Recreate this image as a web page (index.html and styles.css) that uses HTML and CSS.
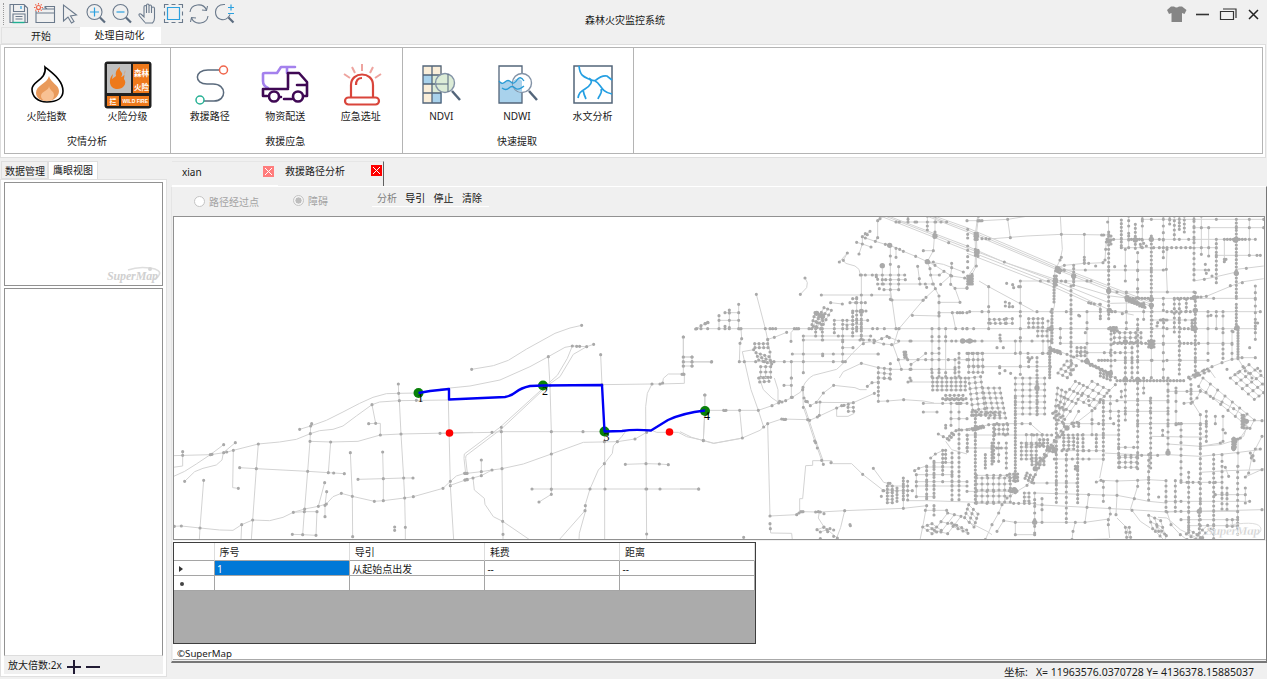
FILE: index.html
```html
<!DOCTYPE html>
<html lang="zh-CN">
<head>
<meta charset="utf-8">
<title>森林火灾监控系统</title>
<link rel="stylesheet" href="styles.css">
</head>
<body>
<div class="app">
  <header class="titlebar">
    <div class="quick">
      <span class="grip"></span>
      <svg viewBox="0 0 22 22"><path class="ln" d="M2 1.500h14l3.500 3.500v14.500H2zM5.500 1.500v7h11v-7M5 19v-8h12v8M7.500 13.500h7M7.500 16h7"/><path class="bl" d="M13 3v3"/><path class="gr" d="M4.500 19.500h12"/></svg>
      <svg viewBox="0 0 22 22"><path class="ln" d="M2 8v11.500h18.500V6H8M10 4h1l2 2M11 3.500h9.500v4M2 10h18"/><circle cx="4.500" cy="4.500" r="2" class="rd"/><path class="rd" d="M4.500 0v1.500M4.500 7.500v1.500M0 4.500h1.500M7.500 4.500h1.500M1.300 1.300l1 1M6.700 6.700l1 1M7.700 1.300l-1 1M1.300 7.700l1-1"/></svg>
      <svg viewBox="0 0 22 22"><path class="ln" d="M4.500 2v16l4.500-4 3.500 6 2.500-1.500-3.500-5.500 6-1z"/></svg>
      <svg viewBox="0 0 22 22"><circle class="ln" cx="9.500" cy="9" r="7.500"/><path class="bl" d="M5 9h9M9.500 4.500v9"/><path class="hd" d="M15 14.500l5 5"/></svg>
      <svg viewBox="0 0 22 22"><circle class="ln" cx="9.500" cy="9" r="7.500"/><path class="bl" d="M5.500 9h8"/><path class="hd" d="M15 14.500l5 5"/></svg>
      <svg viewBox="0 0 22 22"><path class="ln" d="M8 19.500L2.500 13c-1.500-2 .5-3 2-1.500L7 14V4c0-2 2.500-2 2.500 0v6V2.500c0-2 2.500-2 2.500 0V10 3.500c0-2 2.500-2 2.500 0V10 5.500c0-2 3-2 3 0V15c0 2-1 4-2 5H8"/></svg>
      <svg viewBox="0 0 22 22"><path class="ln" d="M1.500 5V1.500h4M15.500 1.500h4V5M19.500 16v3.500h-4M5.500 19.500h-4V16M8.500 1.500h4M8.500 19.500h4M1.500 8.500v4M19.500 8.500v4"/><path class="bl" d="M4.500 4.500h12v12h-12z"/></svg>
      <svg viewBox="0 0 22 22"><path class="ln" d="M2 9C3 1 15-1 18.500 7M19.500 3l-1 4.500-4.500-.5M20 13c-1 8-13 10-16.500 2M2.500 19l1-4.500 4.500.500"/></svg>
      <svg viewBox="0 0 22 22"><path class="ln" d="M11 1.500C4.500 1 1.500 5 1.500 9c0 8 9 9.500 12.500 5.500 1.500-1.500 2-3 2-3"/><path class="bl" d="M14 4.500h6M17 1.500v6M14 10.500h6"/><path class="hd" d="M14.500 14.500l5 5"/></svg>
    </div>
    <h1>森林火灾监控系统</h1>
    <div class="winbtns">
      <svg viewBox="0 0 94 22"><path fill="#858585" d="M5 1.500h3q2.500 2 5 0h3l4.500 3.500-2 4-2.500-1V17H5.500V8L3 9 1 5z"/><path fill="none" stroke="#333" stroke-width="1.600" d="M30 9.500h13"/><path fill="none" stroke="#333" stroke-width="1.200" d="M54.500 6.500h13v8h-13zM57 4h13v9"/><path fill="none" stroke="#222" stroke-width="1.500" d="M83 5l9 9M92 5l-9 9"/></svg>
    </div>
    <nav class="tabs"><span class="tab">开始</span><span class="tab on">处理自动化</span></nav>
  </header>

  <section class="ribbon">
    <div class="groups">
      <div class="group g1">
        <div class="items">
          <div class="item"><svg viewBox="0 0 48 48"><path d="M22 6c7 6 18 13 18 24 0 7-6 11-16 11S9 35 9 28C9 20 24 19 22 6z" fill="#fff" stroke="#000" stroke-width="1.600"/><path d="M26 15c-2 8-13 9-13 17 0 5 5 8 11 8s12-4 12-10-8-8-10-15z" fill="#e99a5b"/><path d="M26 25c0 5-8 5-8 10 0 3 3 5 7 5s6-3 6-6c0-4-4-4-5-9z" fill="#f8c193"/></svg><span>火险指数</span></div>
          <div class="item"><svg viewBox="0 0 48 48"><rect x="0.500" y="0.500" width="47" height="47" rx="3" fill="#202020"/><path d="M3 3h24v29H3z" fill="#bfbfbf"/><path d="M29 3h16v29H29zM3 35h12v10H3zM17 35h28v10H17z" fill="#ee791b"/><path d="M16 6c-2 5 5 5 1 10 2 0 5-3 4-7l-1 9c4 5-2 11-8 10-7-1-8-10-3-15l-1 5 4-3c-1-4 1-7 4-9z" fill="#ee791b"/><g class="sign"><text x="30" y="15">森林</text><text x="30" y="28.500">火险</text><text x="5.500" y="42.500" class="s8">拦</text><text x="18.500" y="42.300" class="s6">WILD FIRE</text></g></svg><span>火险分级</span></div>
        </div>
        <div class="gname">灾情分析</div>
      </div>
      <div class="group">
        <div class="items">
          <div class="item"><svg viewBox="0 0 48 48"><path fill="none" stroke="#5b6b7d" stroke-width="1.500" d="M34 9H22c-14 0-14 14-1 14h6c14 0 14 17 1 17H16"/><circle cx="37.500" cy="9" r="4" fill="#fff" stroke="#f0654b" stroke-width="1.500"/><circle cx="14" cy="39" r="4" fill="#fff" stroke="#28b195" stroke-width="1.500"/></svg><span>救援路径</span></div>
          <div class="item"><svg viewBox="0 0 48 48"><g fill="none" stroke-width="2.600" stroke-linejoin="round" stroke-linecap="round"><path stroke="#a481ed" d="M2 20V13q0-1 2-1h12l4-6h14M2 20q0 5 5 7M26 6v6"/><path stroke="#3f0854" d="M27 27V12h11l8 9v14h-3M2 28h25M2 28v7h4M23 38h8M36 24h9M17 36h3"/><circle stroke="#3f0854" fill="#fff" cx="13" cy="35.500" r="5"/><circle stroke="#3f0854" fill="#fff" cx="37" cy="35.500" r="5"/></g></svg><span>物资配送</span></div>
          <div class="item"><svg viewBox="0 0 48 48"><g fill="none" stroke="#d9453b" stroke-width="2.200"><path d="M14 36V24c0-14 22-14 22 0v12M25 17c-4 0-6 3-6 7"/><rect x="8" y="36.500" width="34" height="7" rx="3.500"/></g><path stroke="#eea49f" stroke-width="2" d="M25 3v7M15 6l3 6M36 6l-3 6M7 13l6 4M44 13l-6 4"/></svg><span>应急选址</span></div>
        </div>
        <div class="gname">救援应急</div>
      </div>
      <div class="group">
        <div class="items">
          <div class="item"><svg viewBox="0 0 48 48"><path fill="#faeed9" d="M6 5h19v37H6z"/><path fill="#a9d2ec" d="M6 14h9v9H6zM15 32h10v10H15z"/><path fill="#dcebd6" d="M15 14h10v18H15z"/><path fill="none" stroke="#53657a" stroke-width="1.300" d="M6 5h18v37H6zM15 5v37M6 14h18M6 23h18M6 32h18"/><circle cx="28" cy="22" r="9.500" fill="#dcecd7" stroke="#8292a6" stroke-width="1.400"/><path d="M31 13v18M19 23h12" stroke="#53657a"/><path d="M35 30l8 9" stroke="#53657a" stroke-width="2.500"/></svg><span>NDVI</span></div>
          <div class="item"><svg viewBox="0 0 48 48"><path fill="#a9d2ec" d="M6 20q3 4 6 1t6 0 6-2 5 2v21H6z"/><path fill="none" stroke="#53657a" stroke-width="1.300" d="M6 5h23v37H6z"/><circle cx="29" cy="22" r="9.500" fill="#fff" stroke="#8292a6" stroke-width="1.400"/><path fill="#a9d2ec" d="M20 20q5-5 9 0v11q-7 0-9-7z"/><path fill="none" stroke="#289bd5" stroke-width="1.300" d="M6 20q3 4 6 1t6 0 6-2 7 1M9 27q4 3 7 0t6 0 9-2"/><path d="M36 30l8 9" stroke="#53657a" stroke-width="2.500"/></svg><span>NDWI</span></div>
          <div class="item"><svg viewBox="0 0 48 48"><path fill="#fff" stroke="#53657a" stroke-width="1.500" d="M6 5h38v37H6z"/><path fill="none" stroke="#259fe2" stroke-width="1.700" d="M11 5c1 10 5 11 10 13s1 7-4 10-6 4-7 9M15 29q1 5 3 9M21 17q4 4 7 2 6-5 11-4l5 4M27 20c6 2 5 11 17 13M33 28c2 4-2 6-3 10"/></svg><span>水文分析</span></div>
        </div>
        <div class="gname">快速提取</div>
      </div>
    </div>
  </section>

  <main class="body">
    <aside class="side">
      <div class="sidetabs"><span class="st">数据管理</span><span class="st on">鹰眼视图</span></div>
      <div class="sidepanel">
        <div class="overview"><svg viewBox="0 0 56 18" class="logo"><path fill="none" stroke="#dedede" stroke-width="1.500" d="M22 4C35-1 58 2 53 9q-1 3-5 4"/><circle cx="44" cy="3" r="2" fill="#d6d6d6"/><text x="1" y="14" textLength="51">SuperMap</text></svg></div>
        <div class="bigbox"></div>
        <div class="zoombar"><span>放大倍数:2x</span><svg viewBox="0 0 36 16"><path stroke="#221c35" stroke-width="2" d="M0 9h14M7 2v14M19 9h14"/></svg></div>
      </div>
    </aside>
    <section class="work">
      <div class="doctabs">
        <div class="dt"><span>xian</span><svg class="x dim" viewBox="0 0 11 11"><path d="M2 2l7 7M9 2l-7 7"/></svg></div>
        <div class="dt on"><span>救援路径分析</span><svg class="x" viewBox="0 0 11 11"><path d="M2 2l7 7M9 2l-7 7"/></svg></div>
      </div>
      <div class="view">
        <div class="tools">
          <label class="opt o1"><i></i>路径经过点</label>
          <label class="opt o2"><i class="sel"></i>障碍</label>
          <div class="acts"><span class="off">分析</span><span>导引</span><span>停止</span><span>清除</span></div>
        </div>
        <svg id="map" class="map" viewBox="174 217 1090 322"></svg>
        <div class="lower">
          <div class="grid">
            <div class="row head"><b></b><b>序号</b><b>导引</b><b>耗费</b><b>距离</b></div>
            <div class="row"><b><i class="tri"></i></b><b class="pick">1</b><b>从起始点出发</b><b>--</b><b>--</b></div>
            <div class="row"><b><i class="dot"></i></b><b></b><b></b><b></b><b></b></div>
          </div>
          <div class="copy">©SuperMap</div>
        </div>
      </div>
    </section>
  </main>
  <footer class="status"><span>坐标:</span><span>X= 11963576.0370728 Y= 4136378.15885037</span></footer>
</div>
<script src="map.js"></script>
</body>
</html>
```
FILE: styles.css
```css
* { box-sizing: border-box; }
body { margin: 0; background: #f0f0f0; color: #1a1a1a; font: 10px/12px "Noto Sans", "Noto Sans CJK SC", sans-serif; }
.app { width: 1267px; height: 679px; overflow: hidden; display: flex; flex-direction: column; background: #f0f0f0; }
svg { display: block; }

.titlebar { height: 44px; flex: none; display: grid; grid-template-columns: 500px 250px 1fr; grid-template-rows: 27px 17px; }
.quick { display: flex; gap: 3.800px; padding: 3px 0 0 3px; }
.quick svg { width: 22px; height: 22px; }
.grip { width: 1px; height: 22px; border-left: 1px dotted #999; }
.ln { fill: none; stroke: #6b7a8c; stroke-width: 1.100; }
.bl { fill: none; stroke: #2ba0df; stroke-width: 1.200; }
.gr { stroke: #20af93; stroke-width: 1.400; }
.rd { fill: none; stroke: #f0654b; stroke-width: 1.100; }
.hd { stroke: #5d6d80; stroke-width: 2.200; }
h1 { margin: 0; font-size: 10px; line-height: 12px; font-weight: 400; text-align: center; padding-top: 14px; }
.winbtns { justify-self: end; padding: 5px 7px 0 0; }
.winbtns svg { width: 94px; height: 22px; }
.tabs { grid-column: 1 / 4; display: flex; padding-left: 1px; }
.tab { width: 79px; border: 1px solid #e2e2e2; border-right: 0; text-align: center; line-height: 16px; }
.tab.on { width: 81px; background: #fff; border: 0; line-height: 16px; padding-right: 2px; }

.ribbon { height: 114px; flex: none; background: #fff; border: 1px solid #dedede; padding: 2px 3px; margin-right: 1px; }
.groups { display: flex; height: 107px; border: 1px solid #b4b4b4; width: 1259px; }
.group { width: 231.600px; border-right: 1px solid #b4b4b4; padding: 13px 3px 0 1px; }
.g1 { width: 166px; padding: 13px 2px 0 1px; }
.items { display: flex; }
.item { flex: 1; display: flex; flex-direction: column; align-items: center; line-height: 12px; }
.item svg { width: 48px; height: 48px; }
.item span { height: 13px; padding-top: 1px; }
.gname { text-align: center; padding-top: 13px; }
.sign { fill: #fff; font: bold 7.500px "Noto Sans CJK SC", sans-serif; }
.s8 { font-size: 7px; }
.s6 { font-family: "Liberation Sans", sans-serif; font-size: 5px; }

.body { height: 505px; flex: none; display: flex; gap: 4px; padding-top: 3px; }
.side { width: 167px; height: 518px; display: flex; flex-direction: column; }
.sidetabs { display: flex; height: 18px; padding-left: 1px; }
.st { width: 47px; border: 1px solid #dfdfdf; padding-left: 3px; line-height: 18px; white-space: nowrap; }
.st.on { width: 50px; background: #fff; padding-left: 4px; line-height: 16px; border-bottom: 0; }
.sidepanel { height: 498px; background: #fff; border: 1px solid #e0e0e0; padding: 2px 3px; }
.overview { height: 104px; width: 159px; border: 1px solid #919191; display: flex; justify-content: flex-end; align-items: flex-end; }
.logo { width: 56px; height: 20px; font: italic bold 12px "Liberation Serif", serif; fill: #d0d0d0; }
.bigbox { margin-top: 2px; height: 368px; width: 159px; border: 1px solid #919191; border-bottom-color: #ddd; }
.zoombar { height: 18px; width: 159px; background: #f0f0f0; display: flex; padding: 3px 0 0 4px; gap: 5px; }
.zoombar svg { width: 36px; height: 16px; margin-top: -1px; }

.work { width: 1096px; display: flex; flex-direction: column; }
.doctabs { height: 25px; display: flex; padding-left: 1px; }
.dt { display: flex; width: 106px; border-top: 1px solid #e6e6e6; border-bottom: 1px solid #fff; justify-content: space-between; padding: 4px 4px 0 10px; }
.dt.on { border-right: 1px solid #606060; border-bottom: 0; padding: 3px 1px 0 7px; }
.x { width: 11px; height: 11px; background: #f00; fill: none; stroke: #fff; }
.dim { background: #ff7c7c; }
.view { height: 477px; border: 1px solid #e5e5e5; border-right-color: #777; border-bottom: 2px solid #777; border-top-color: #fff; padding-left: 1px; }
.tools { height: 29px; display: flex; color: #a3a3a3; }
.opt { display: flex; gap: 4px; padding-top: 9px; }
.opt i { width: 11px; height: 11px; border: 1px solid #c4c4c4; border-radius: 50%; background: #fff; }
.opt .sel { background: radial-gradient(circle, #bdbdbd 45%, #f4f4f4 52%); }
.o1 { margin-left: 21px; width: 99px; }
.o2 { width: 79px; padding-top: 8px; }
.acts { display: flex; gap: 8.300px; color: #111; padding: 5px 7px 0 5px; height: 20px; border-bottom: 1px solid #fff; }
.off { color: #808080; }
.map { width: 1092px; height: 324px; background: #fff; border: 1px solid #919191; }
.lower { height: 120px; background: #fff; border-top: 1px solid #f0f0f0; border-bottom: 1px solid #aaa; padding-top: 1px; }
.grid { width: 583px; height: 102px; background: #ababab; border: 1px solid #3e3e3e; }
.row { display: grid; grid-template-columns: 40.500px 135.200px 135.200px 135.200px 1fr; grid-template-rows: 15px; height: 15px; }
.row b { font-weight: 400; background: #fff; border-right: 1px solid #a5a5a5; border-bottom: 1px solid #a5a5a5; padding-left: 2.500px; line-height: 16px; }
.row.head { height: 18px; grid-template-rows: 18px; }
.head b { padding-left: 5px; border-right-color: #ddd; line-height: 18px; }
.row .pick { background: #0078d7; color: #fff; }
.tri { display: block; width: 0; border: 3px solid transparent; border-left: 4px solid #333; margin: 5px 0 0 2px; }
.dot { display: block; width: 4px; height: 4px; border-radius: 50%; background: #444; margin: 6px 0 0 3px; }
.copy { padding: 4px 4px; font-size: 9.700px; }
.status { display: flex; justify-content: flex-end; gap: 8px; padding: 3px 13px 0 0; font-size: 10.500px; }

.road { fill: none; stroke: #d3d3d3; stroke-width: 3; }
.node { fill: none; stroke: #a9a9a9; stroke-width: 9.500; stroke-linecap: round; }
.hub { fill: #a9a9a9; }
.route { fill: none; stroke: #0000f5; stroke-width: 2.400; stroke-linejoin: round; }
.stop { fill: #088008; }
.bar { fill: #f00; }
.num { font: 12px "Liberation Serif", serif; fill: #000; }
.mlogo { font: italic bold 13px "Liberation Serif", serif; fill: #d2d2d2; stroke: #fff; stroke-width: .3px; }
```
FILE: map.js
```
/* Road network, one block per tile. Units are thirds of a pixel.
   v x y..   column of junctions      h y x..   row of junctions
   p x,y ..  road with junctions      l x,y ..  road only
   d x,y ..  junctions only           g x y ax ay an bx by bn   lattice
   c x,y ..  large interchange
   a-b/s in v and h expands to an evenly spaced run */
var tiles = [
[173, 370, `
l 0,257 112,254 160,247 181,241 256,222 320,216 370,208 412,191 440,182 480,178 510,168 550,138 597,104 620,96 679,92 826,90
l 0,320 35,304 70,282 112,254 152,224
l 35,334 65,305 90,295 130,285 147,270 151,248 187,218
l 380,178 413,168 460,151 510,126 560,100 600,82 640,71 677,70 737,69
d 112,254 117,253 152,248 161,246 181,241 256,222 412,191 597,104 679,92 730,91 152,224 35,334 187,218 380,178 413,168 677,70
p 416,161 413,168 412,191 411,214 404,304 395,417 394,425 389,494
v 29 245 256
l 29,256 29,288 0,292
l 181,241 179,353 196,355
d 196,355
p 256,222 250,296 239,450
l 239,450 235,510
p 200,293 250,296 404,304 466,308 482,309 514,311
l 411,214 473,216 555,214 622,195 684,192 829,189 900,187
d 411,214 473,216 622,195 684,192
p 473,216 466,308
p 455,338 436,409
p 461,365 456,406 456,440
p 597,104 608,160 587,161
l 608,160 622,160 622,195
p 676,42 677,70 679,92 684,192 692,324 695,384 697,472
l 697,472 697,510
p 532,248 538,379 539,500
p 629,246 631,326 631,392
p 555,328 631,326 692,324 720,324
p 92,331 81,474
l 81,474 79,510
l 0,469 25,468 81,474 140,480 180,481 206,464 239,450 290,452 330,442 361,427 395,417 436,409 460,402 480,380 505,370 538,379 604,394 631,392 695,384 721,380 810,355 832,334 850,318 875,310
d 4,469 25,468 206,464 361,427 436,409 460,402 505,370 604,394 721,380 810,355 832,334 832,347 875,310 882,310 876,330 883,329
p 361,427 394,425 432,425 429,496
p 358,493 389,494 429,496
l 206,464 204,510
l 826,90 832,347 842,510
d 665,471 665,481
`],
[440, 310, `
l 95,178 160,167 205,151 260,117 345,70 390,54 425,46
d 95,178 425,46
l 0,237 90,228 180,210 270,170 325,140 375,112 397,108 440,110 461,103
d 325,140 397,108 410,109 419,109 440,110 461,103
l 397,108 382,145 352,196 320,225 180,352 73,432 72,445 77,490
l 440,110 400,133 360,200 325,225 184,357 78,437 77,445 82,490
p 325,140 330,227 334,365 334,432 334,538 334,553 297,576
p 482,134 486,224
p 0,370 156,367 184,365 334,365 429,365 494,365
p 184,352 184,365 186,476 188,634 189,673
l 189,673 189,690
l 486,224 636,222 660,222 733,220 733,192 685,192 670,205 668,220
d 636,222 660,222 668,219 730,192
l 636,222 622,250 617,290 620,690
d 620,367 618,461 620,537 620,672
p 730,81 730,141 730,156 730,168 730,192
h 141 730 756
h 156 730 756 814
v 756 141 156 168
l 620,367 585,387 532,395 430,397 334,432 250,462 186,476 156,480 124,497 79,509 31,526
d 585,387 532,395 493,395 156,480 124,497 99,504
p 75,490 81,490 124,485 124,450
l 124,485 156,480
d 75,510 81,508
l 99,504 103,540 133,565 135,583 160,620 188,634 270,690
l 560,360 545,380 520,408 517,430 493,461 475,480 450,537 437,580 437,602 418,670 417,690
d 493,461 450,537 436,587 435,602
l 435,602 357,690
l 494,365 494,690
h 537 276 334 450 495 618 660 776
p 556,463 618,461 658,462 685,464
l 633,360 650,367 715,367 740,380 790,391 822,400 900,386
p 795,255 795,300 790,391
d 767,57 796,41 803,37
l 767,57 803,37
`],
[680, 216, `
h 338 50 63 83 117 135 148 176 256 270 278 287 343 350 387 395 407 427 463 488 518 530 544 578 592 613 648 657 756 777 797 848 861
v 176 265 290 313 338
v 148 282 291 313 338
v 117 299 313 338
h 290 135 148 176
h 313 117 176
d 135,331 148,335 63,329 75,323 84,320
p 229,235 256,338 263,371 270,408 273,437
p 183,338 185,368 180,382 178,437
h 437 178 193 227 253 282 313 334 370 460 488 496
v 10 363 423 437 450
h 423 10 36
h 437 10 36 95
h 450 10 36
d 6,475 12,475
l 320,349 283,364 263,370
d 320,349 283,364 263,370 221,401
g 224 383 13 0 4 1 12 2
g 228 410 13 4 4 4 11 3
g 242 452 15 0 3 0 16 3
l 221,401 187,407 205,486
l 375,186 382,200 380,215 361,235
d 375,186 361,235
l 343,338 333,350 333,376
d 333,376 356,338
h 237 424 544 575
l 575,237 631,237
d 452,260 487,264
l 452,260 487,264
g 432 275 -8 14 5 11 4 3
g 405 290 -3 12 4 13 6 3
v 463 313 325 338 350
v 427 338 348 360 372
v 407 338 348 360
l 478,138 502,111 490,133 497,142 525,150 537,160 541,177
d 478,138 502,111 490,133
v 544 177 237 260 285-372/12
v 518 290-350/12
v 530 245 260 285-345/12
v 488 313 325 338 360 377 395 414 437
v 501 313 328 338
h 313 463 488 518 530 544 563
h 325 488 518 544
h 285 518 530 544 558
h 260 510 527 544 556
h 248 518 530
h 177 541 556 577 589 607 631 656 674
h 191 607 617 631 656 676
h 204 593 610 631 656 720 736 758
h 221 612 631 656
v 631 87 120 145 177 191 204 221 250
v 656 152 177 191 204 221
v 607 149 177 191 204
d 604,149 598,218 589,182 593,190
v 593 14 65
l 593,14 600,8 612,0
d 600,8
p 530,79 547,84 573,93
p 537,114 547,84 547,62 570,46
d 556,53 562,56
p 547,62 556,66 586,76 616,85 629,88 659,100 670,106 707,121 742,137 765,148 792,166 815,180 854,186
v 648 97 124
p 586,76 593,65
l 601,0 861,103
l 615,0 861,96
l 625,0 861,90
l 740,0 861,47
l 750,0 861,41
l 763,0 861,35
h 18 648 658 684 705 710 767 783 800
v 684 0 10 18
p 767,0 765,18 765,48 763,56 763,64 760,104
h 104 730 760
v 742 0 18 30 42
d 806,80
p 760,104 742,137 750,158 752,177 760,204 766,218 777,240 777,260
v 777 260 290 299 338 362 375 397 412 431 460 470 482
p 713,151 718,188 720,204
l 743,137 790,145 850,168
d 760,138 850,168 740,214 742,135 747,139
p 752,177 778,177 792,166
p 815,142 815,155 812,178 812,205 825,217 840,259
h 217 825 861
h 259 777 840
p 782,205 812,178
h 252 636 730
p 766,218 738,244 729,253 657,338
p 631,221 636,252 648,338
p 697,298 777,300
h 290 777 817 832 840 848 861
p 817,290 827,338
v 797 338 362 375 470 482
h 375 656 690 693 756 777 797 815 828 848 853 861
d 605,368 621,361 628,365 611,384 635,386
l 578,380 605,368 621,361 656,375 656,380 635,386 611,384 585,377
l 656,338 648,365 640,390 655,431 664,460
d 655,431 664,460
v 756 338 362 375 412 431 470 482
h 431 655 683 714 737 756 777 805 825 861
g 672 408 5 0 2 1 8 3
p 737,412 714,431 693,445 693,460
h 412 756 777
h 414 337 370 428 460 488 595
h 372 370 428 488 540 550 568 582
v 370 360 372 414 437 470
h 360 370 407 427 475 488 518 544 572
h 395 488 519
l 388,486 400,478 470,460 495,437 519,410 550,380 578,377
l 478,486 490,467 544,442
p 544,442 595,455 631,460 664,460 690,460 755,460 777,460 825,460
g 595 455 18 2 3 0 15 3
d 594,414 550,383 582,380 584,374 428,419 631,443
v 825 431 455 470 485
v 837 412-485/14
v 334 437 486
c 742,137 629,88 765,60 607,149 544,286 848,375 427,300 410,292
`],
[680, 378, `
h 97 75 131 138 179 235
l 235,97 276,83 296,73 317,68 337,58 362,42 375,15 388,0
d 276,83 296,75 299,70 306,72 317,68 337,58
l 205,0 213,35 235,97 251,147
v 74 51 97
p 74,97 70,188
l 70,188 35,178 0,161
l 70,188 100,196 187,180 240,157 263,137 305,123 383,125
p 179,97 187,180
d 251,147 263,137 305,123 311,124 317,124
p 263,137 270,414
l 56,333 0,333
d 56,333
p 270,437 271,452
l 271,452 272,465 335,466 337,486
v 334 0 22 58
h 22 312 334
g 236 0 14 -1 3 3 12 2
l 238,0 250,35 276,60 294,72
l 283,0 294,35 294,72
p 369,28 372,60 391,83
p 368,35 370,88 383,125 404,189 412,210 425,247 430,259
l 375,90 408,189 430,250
d 377,70 382,71 407,194 389,127
p 461,22 430,45 409,73
l 391,83 409,73 520,74
l 461,22 525,29 540,35 560,35
p 420,72 418,112 412,117
p 389,127 412,117 470,90 485,83 492,82 505,79 520,74 583,46
l 470,90 470,115 504,115 523,106
g 504 88 16 0 2 1 12 2
p 562,25 576,14 595,12
v 595 0 14 28 40 52 70
p 595,70 623,69 671,65
l 671,65 730,69 762,75
l 270,414 350,410 363,401
p 350,410 357,405 363,401 369,401 407,402 415,401 421,402
p 494,398 670,391 740,383
l 421,402 494,398
d 432,407
l 359,401 359,362 368,362 377,263 398,262 398,248 455,248 458,257 515,257 548,289 611,338
d 453,254 548,289 611,338
l 418,402 415,420 432,447 460,470 472,480
g 411 455 20 -7 2 10 7 2
d 432,447 450,452 461,456 443,461 461,475 472,480 421,482 510,440 511,443 191,478
l 494,398 482,448 470,480
l 580,271 611,313 625,316
d 580,271
g 622 324 15 0 2 0 10 6
v 651 330-370/10
d 625,316 630,316 604,355 609,338
h 324 622 637 670 683
h 338 609 637 651 670 683 697
v 670 300-365/9
v 670 365 391
v 683 310-368/14
v 709 290 311 324 356
h 356 709 740 762
v 740 264-370/14
v 762 250-368/12
v 788 217-300/12
v 797 217-260/12
v 816 225-370/14
v 837 155-370/14
v 862 172-225/12
p 704,278 716,271
l 716,271 740,264
p 752,240 766,228
l 766,228 790,217
h 254 762 788 816
h 267 740 762 788 816
h 290 709 740 762 788 816
h 311 709 740 762 788 816 837 861
h 324 709 740 762 816 861
l 683,368 740,368 900,373
v 762 383 393 411
h 397 736 762 800
h 102 730 771
h 76 730 788 813 830 843 861
p 775,168 790,176 802,182 815,165 828,158 845,156 868,154
v 797 142 150
g 802 182 7 -8 3 5 4 2
l 797,190 815,215 861,228
g 758 0 14 0 8 0 12 4
g 797 52 13 0 5 0 13 2
h 122 813 837 861
v 813 76 102 122 142
v 837 76 102 122 155
h 62 788-861/14
h 12 684 758 771
d 690,0 693,8 612,0 628,0
p 740,383 728,447
l 728,447 720,486
g 803 405 20 5 3 -20 26 3
g 815 435 15 7 4 4 10 2
g 728 447 14 -5 3 14 10 3
`],
[967, 216, `
p 35,0 33,15 28,55 28,65 30,105 28,115 28,150 15,175 8,190 0,215
l 32,0 24,62 26,110 24,150 0,185
g 24 52 7 0 2 0 9 3
g 25 100 8 3 2 0 9 3
g 2 180 7 0 3 0 8 4
d 2,40 2,55 2,66 2,90 2,103 2,122 2,137 2,155 45,14 38,14 45,68 57,68 67,69
p 0,14 33,14
l 45,14 122,10 185,0
p 122,10 130,65
l 67,69 180,60 283,55 424,57
d 283,55 352,55 404,57 410,57
l 280,0 284,70 286,100 280,130 268,155
d 283,124 279,132
l 352,55 352,142
d 352,124 352,132 352,140
p 268,155 292,148 352,142 365,142 408,140 414,132 416,100 418,78 425,55
l 425,55 424,0
d 422,18 386,150
l 0,35 270,150 550,258
l 0,41 270,156 550,264
l 0,47 270,161 480,245 550,270
l 0,90 110,138 265,190 430,240 490,247
l 0,96 265,196 430,262 530,260
l 0,103 265,206 430,283 500,297
l 0,112 265,215 400,275
g 268 155 6 3 3 -2 9 2
d 112,138 220,195 244,195 283,163 292,163 283,195 296,197
l 263,165 265,200 262,270 252,310 250,400
g 262 180 6 0 2 0 9 4
v 261 195-260/9
v 255 280-380/10
v 320 148-215/10
v 312 210-480/14
h 195 265 283 296 320 360 372
h 287 8 45 65 160 210 252 298 312 360 400 425-450/10 478 530 555 600-690/14 723 768 880
h 338 0 20 65 160 252 280 312 360 425 440 478 512 555 600 640-690/12 723 768 805 865
h 375 0-28/8 45 101 145 160 195 228 252
l 36,195 65,212 200,285
v 65 212 272 287 321 338
h 195 160 265
v 160 195 212 261 287 300 338 365 410 450 475
d 119,202 137,206 140,215 155,212 115,258 127,262 137,272 127,272 115,270
g 67 310 15 0 4 3 12 2
g 118 308 18 0 2 0 14 2
d 99,357 99,367 90,395 109,395
g 185 308 14 0 4 0 13 3
g 212 345 14 0 3 0 15 2
v 243 315 338 375 412
v 280 338 365 382
l 145,375 145,412
h 412 0-45/15 145 160 183 226 250
g 5 412 14 0 4 0 19 4
h 452 5 20 34 48 98 160 185 250
d 98,455 114,464 98,472 131,472 183,425 188,430 195,425 185,437
v 210 425-485/13
v 228 375 412
v 425 48-310/13
v 432 60-95/12
v 463 12-95/11
v 485 0 14 30 52 60 72 95
v 475 100 150 195
v 505 25-100/12
v 512 110-247/27
v 526 0 15 30 72 95
v 553 60-380/12
v 589 0 30 50 72 95 107 125
v 608 0-35/12
v 622 0-72/14
v 637 0-40/10
v 652 0-50/12
v 681 0-200/16
v 703 0 35 95 115
v 725 35 95 120
v 748 70-200/13
v 772 70 130 137
v 808 10-245/11
v 847 10 35 70 118
v 865 210-375/20
h 10 526 553 589 608 681 748 808 847 890
h 35 681 703 725 808 890
h 70 420 440 463 485-530/8 553 577 589 622 637 665 681 772-835/9 865
h 95 463 485 526 560 577 600-680/14 703 725 748
h 162 292 355 425 475 512 553 589
h 162 681 715 725
p 600,100 598,160 601,228
h 228 425 450 478 512 553 601 681
h 118 748 808 870 880
d 715,145 718,172 735,180 777,130 520,85 530,82 522,93 538,90 443,152
l 681,195 735,185 800,170 808,160 890,150
d 712,190 838,157
l 690,243 718,241 800,207 830,197 890,188
d 692,243 702,243 718,241 790,209 826,200
h 247 480-545/9 589 622-680/10 740 808 865
g 478 245 8 3 5 0 8 2
g 515 262 8 2 3 3 8 2
v 685 230-485/13
v 478 230 247 287 320 338
v 530 262 287 310
v 589 247-287/18
v 622 250-350/14
v 637 250-485/14
v 658 250-287/12
d 365,260 372,262 382,264 398,265
v 360 287 320 410 430
v 400 265 280 300 308
d 466,293 335,298 338,300 355,350
h 312 555 580 600 637 655 680
d 585,312 590,320 597,312 572,320 570,330
g 675 313 9 0 2 0 9 4
v 723 287 300 338 382 412
v 748 287 300 338
v 768 287 300 350 385-440/14
v 808 265-335/10
v 813 335-425/8
v 795 345 385 412 430
d 865,320 872,321 798,347 848,395 732,298
h 382 280 312 360 440-545/12 555 589 640-700/11 723 768 795
g 545 375 8 0 3 0 9 3
g 430 335 9 0 3 3 9 2
g 442 350 16 0 6 0 15 3
v 475 380-485/15
v 495 380-485/15
v 512 310-485/16
v 432 338-485/16
h 410 340 412 430 444 460 475 495
h 433 395-430/9 444 475 495 512 555 600 640 685 723
v 553 395 433 485
v 589 310-485/25
p 250,395 275,405 300,415 320,423 345,435 370,448 400,462 420,475 445,485
g 252 398 9 3 4 2 6 2
g 355 435 10 5 8 4 5 2
g 400 462 10 4 4 0 9 3
p 813,428 795,430 765,440 735,452 712,462 690,475 665,485
g 665 483 14 -6 5 5 6 2
p 813,428 828,452 845,472 855,486
l 723,455 745,486
h 425 813 825 865
d 780,460 813,470 835,465 872,457 880,465
g 300 435 -9 12 4 14 7 3
g 330 395 12 0 3 0 12 3
v 248 395-485/9
c 28,60 30,108 8,185 10,198 272,158 265,195 320,180 425,225 427,283 480,245 505,72 553,70 808,70 805,72 553,250 553,268 685,283 682,338 682,245 440,338 475,378 553,380 553,390 252,338 8,375 808,172 810,335 430,472 690,475 360,436 425,75
`],
[967, 378, `
g 5 0 18 -2 3 2 16 8
g 47 30 17 0 4 3 15 7
g 15 102 14 0 7 -1 10 2
g 145 0 22 0 5 0 18 7
v 210 0-120/11
p 0,155 25,150 45,145 65,140 90,137 120,137
h 137 120 145 165 190
g 15 152 8 -2 5 3 4 2
l 190,137 225,168
v 25 100-375/11
v 80 140-250/11
g 83 140 13 0 4 0 14 3
v 55 230-275/10
v 75 195-265/9
v 95 195 210 230 250
v 118 195-270/15
g 128 288 12 0 3 0 10 3
v 145 60-315/10
h 171 0 25 83 115 145 200 225 240 254
h 210 0 25 75-118/14
g 163 195 15 0 4 0 12 5
g 218 185 12 0 3 0 10 3
g 178 170 16 0 4 0 30 2
g 28 300 17 0 7 0 18 5
h 292 28 60 80 100 120 145
p 335,100 315,135 300,150 285,170 262,190 250,212 235,235 215,270 205,290 180,322 150,340 120,360 105,380 95,405 75,440 55,485
g 242 208 9 2 4 -3 9 2
g 292 145 -10 14 9 6 4 2
g 130 330 9 3 3 -3 8 2
h 340 0 28 60 80 130 145
g 5 380 14 14 3 -4 13 4
l 0,430 60,460 75,470
p 90,460 110,428 145,433 203,433
p 145,433 145,470 203,470
v 203 345-470/20
v 225 362 380 395 433
h 376 28 60 80 140 155 172 187 203
g 172 345 14 0 2 0 12 3
g 180 285 10 6 3 -3 8 3
g 195 240 12 0 4 0 10 3
p 445,20 420,45 400,65 375,98 330,133
g 325 10 -17 24 5 12 6 4
g 272 30 -2 18 6 12 6 3
g 375 10 17 9 4 -14 18 4
g 320 135 15 0 2 0 10 2
v 268 100-385/13
v 298 230-433/16
v 332 170-385/12
v 348 170-218/12
v 375 98 125 137 170
v 388 170-220/12
v 409 75-245/13
v 430 55-140/22
h 137 270 290 315 335 375 395 409 440
h 171 290-350/14 388 409 455
g 290 180 15 0 3 0 11 4
h 218 285 300 350 366 388 409
h 243 262 298 316 348 366 409
g 325 265 7 0 2 0 8 2
l 409,245 398,300
h 315 200 240 268 298 330
v 409 310 328 352 370
p 388,312 402,307 450,309 512,307 545,305 597,308
v 455 100-270/14
v 475 0-135/18
v 512 0-275/16
v 463 40 57
h 8 450-650/10
h 100 409 430 455 475 512 550 603
h 68 365 409 450 512 550 603
v 530 0 30 45
v 551 60-275/15
v 587 157 172
v 603 0-230/18
p 603,198 700,205 760,195
l 700,205 760,200 800,188 830,175 838,150 825,115
l 551,175 660,177 720,177
l 409,225 550,232 605,230 700,235 800,225 880,215
h 208 455 475 500 512
h 232 455 475 492 512 524 551 572
g 458 238 17 0 4 0 15 3
v 642 137-312/19
v 672 20-80/14
v 627 30 44 70 100 140
p 651,76 676,72 690,60 700,40
p 676,72 700,110 700,140
h 40 603 627 660 672 700
h 137 512 550 603 627-650/8 700 718
v 700 137-400/15
v 718 100-200/15
v 745 115 137
v 768 115 190
v 740 230-485/14
v 697 400-470/13
v 765 230 250
l 700,283 780,278 885,275
h 313 642-700/18 728 745 765
p 775,268 785,295
v 800 180-220/7
g 797 183 8 0 2 0 8 4
p 700,38 730,55 765,72 800,92 830,112 838,130 840,150 820,180 800,200
g 825 112 6 2 2 0 9 5
g 708 0 22 18 8 -13 25 2
g 790 0 18 16 5 14 -10 5
h 128 830 885
p 885,175 865,213 855,235 845,285 835,297
h 213 865 880
g 850 225 8 8 2 3 15 2
l 835,297 890,272
d 885,275 768,155 775,165
v 812 265-470/17
v 813 183 225 265
v 665 283-475/15
v 780 330-400/16
v 765 265-400/16
v 835 330 350 375
h 350 745 765 780 835
h 370 597 625 642 700 848
v 597 308-400/16
v 625 308-400/16
v 545 230-370/17
h 400 597 625 642 665 697 740 812
p 450,309 450,352 447,410
l 512,307 512,325 490,395
d 512,325 502,362 495,397 575,357
l 203,345 450,352 545,370 597,375
l 203,380 360,388 490,395 600,402 885,395
d 885,395 268,345 360,388
p 365,350 360,388 354,433
h 433 203 225 298 325 354
l 354,433 425,423
p 325,433 318,460 315,485
p 428,390 430,408 424,425 424,440
l 424,440 428,480
l 354,485 425,483
l 450,420 480,450 487,480
g 475 448 12 0 2 2 15 3
l 495,397 520,430 550,450
g 545 412 6 20 3 18 8 3
g 570 445 14 14 3 -5 15 2
p 600,402 612,440 640,470 660,485
l 573,418 600,420 640,455 700,485
g 665 455 14 8 4 -7 13 2
g 690 470 16 -14 3 10 9 2
h 425 642 665 700 740 812
h 443 665 700 740 780 812
g 780 425 16 0 3 0 20 2
c 210,30 28,150 262,215 245,212 142,335 512,5 475,4 803,190 800,210 838,130 300,150 203,433 697,400 603,225 205,272
`]
];

var spread = function (list) {
  var out = [];
  list.forEach(function (t) {
    var m = t.match(/^(\d+)-(\d+)\/(\d+)$/);
    if (!m) { out.push(+t); return; }
    for (var k = +m[1]; k <= +m[2]; k += +m[3]) out.push(k);
  });
  return out;
};

var svg = document.getElementById('map');
var html = '';
tiles.forEach(function (tile) {
  var roads = '', nodes = '', hubs = '';
  var road = function (pts) { if (pts.length > 1) roads += 'M' + pts.join('L'); };
  var dots = function (pts) { pts.forEach(function (p) { nodes += 'M' + p + 'h.01'; }); };
  tile[2].trim().split('\n').forEach(function (line) {
    var t = line.trim().split(/\s+/), kind = t.shift();
    if (kind === 'v' || kind === 'h') {
      var fixed = t.shift();
      var pts = spread(t).map(function (n) { return kind === 'v' ? fixed + ' ' + n : n + ' ' + fixed; });
      road(pts); dots(pts);
    } else if (kind === 'c') {
      t.forEach(function (s) {
        var c = s.split(',');
        hubs += '<circle class="hub" r="8" cx="' + c[0] + '" cy="' + c[1] + '"/>';
      });
    } else if (kind === 'g') {
      var n = t.map(Number), cols = [];
      for (var i = 0; i < n[4]; i++) {
        var run = [];
        for (var j = 0; j < n[7]; j++) run.push((n[0] + i * n[2] + j * n[5]) + ' ' + (n[1] + i * n[3] + j * n[6]));
        road(run); dots(run); cols.push(run);
      }
      for (var r = 0; r < n[7]; r++) road(cols.map(function (c) { return c[r]; }));
    } else {
      var q = t.map(function (s) { return s.replace(',', ' '); });
      if (kind !== 'd') road(q);
      if (kind !== 'l') dots(q);
    }
  });
  html += '<g transform="translate(' + tile[0] + ' ' + tile[1] + ') scale(.33333)"><path class="road" d="' + roads + '"/><path class="node" d="' + nodes + '"/>' + hubs + '</g>';
});

[[418.5, 393], [543, 385.5], [604.5, 431.5], [705, 411]].forEach(function (s, i) {
  html += '<circle class="stop" r="5" cx="' + s[0] + '" cy="' + s[1] + '"/><text class="num" x="' + (s[0] - 1) + '" y="' + (s[1] + 9) + '">' + (i + 1) + '</text>';
});
html += '<path class="route" d="M418.500 393L430 391 449 389V399.500L505 397Q511 396 516 392T530 386L543 385.500 602 385 604.500 431.500 622 431Q634 429 651 430.500L668 420Q683 413 705 410.500"/>';
html += '<circle class="bar" r="3.800" cx="449.500" cy="433"/><circle class="bar" r="3.800" cx="669.500" cy="432"/>';
html += '<text class="mlogo" x="1206" y="535" textLength="54">SuperMap</text><path fill="none" stroke="#ddd" d="M1230 525q30-5 31 4 0 4-5 5"/>';
svg.innerHTML = html;
```
